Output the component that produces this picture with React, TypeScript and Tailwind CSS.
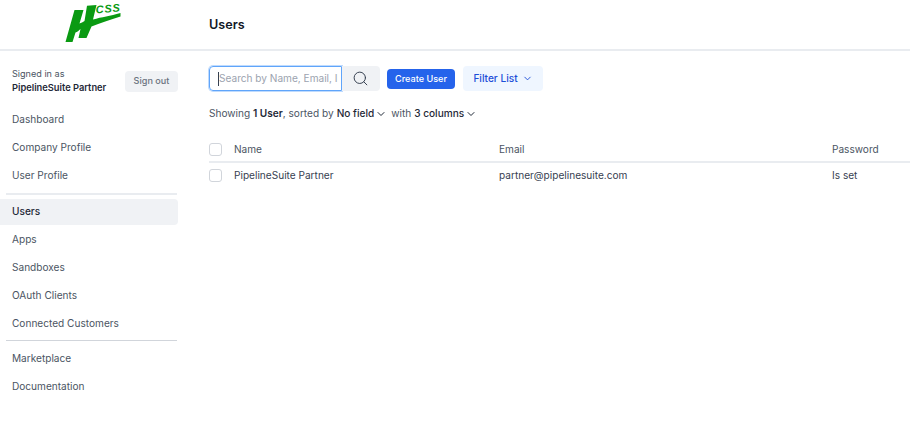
import { ChevronDown, Search } from 'lucide-react';

const groupOne = ['Dashboard', 'Company Profile', 'User Profile'];
const groupTwo = ['Users', 'Apps', 'Sandboxes', 'OAuth Clients', 'Connected Customers'];
const groupThree = ['Marketplace', 'Documentation'];

function Logo() {
  return (
    <svg width="62" height="44" viewBox="0 0 62 44" className="shrink-0">
      <path fill="#0a9a12" d="M9.5 9 L18.5 9 L14.5 22.5 C16 22 18 21 19.5 20 L22 4.7 L31.5 4 L28 18.5 C37 16 45 15 55.5 12 L55.5 15.5 C45 19 35 22 26.5 25.5 L21.5 37 L13.5 37 L15.5 28 C14 29.5 12 31 10.5 31.5 L7.5 41 L0.5 41 Z" />
      <text x="31" y="12.5" fill="#0a9a12" fontSize="11" fontWeight="700" fontStyle="italic" transform="rotate(-5 31 12)" fontFamily="'Liberation Sans', sans-serif" letterSpacing="0.8">CSS</text>
    </svg>
  );
}

function NavItem({ label, active }: { label: string; active?: boolean }) {
  return (
    <div className={active ? 'h-[26px] mb-[1px] flex items-center pl-3 rounded-r bg-[#f0f2f5] text-[#1f2937] font-medium' : 'h-[27.8px] flex items-center pl-3 text-[#4b5563]'}>
      {label}
    </div>
  );
}

export default function App() {
  return (
    <div className="h-[433px] w-[910px] bg-white overflow-hidden flex flex-col text-[10.1px] text-[#374151] font-['Inter',sans-serif]">
      <header className="h-[51px] flex border-b-2 border-[#e9ecf0]">
        <div className="w-[183px] pl-[65px] pt-[1px]">
          <Logo />
        </div>
        <h1 className="pl-[26px] pt-[16px] text-[12.6px] font-semibold text-[#111827]">Users</h1>
      </header>
      <div className="flex flex-1">
        <aside className="w-[183px]">
          <div className="flex items-center justify-between pl-3 pr-[5px] pt-[16px] pb-[11px]">
            <div className="leading-[14px] text-[9.3px]">
              <div className="text-[#4b5563] text-[9.1px]">Signed in as</div>
              <div className="font-semibold text-[#1f2937]">PipelineSuite Partner</div>
            </div>
            <button className="h-[21px] w-[53px] rounded bg-[#f0f2f5] text-[9.1px] font-medium text-[#6b7280]">Sign out</button>
          </div>
          <nav>
            {groupOne.map((item) => (
              <NavItem key={item} label={item} />
            ))}
            <div className="mx-[6px] mt-[3.5px] mb-[4px] border-t-2 border-[#e9ecf0]" />
            <div className="mr-[5px]">
              {groupTwo.map((item) => (
                <NavItem key={item} label={item} active={item === 'Users'} />
              ))}
            </div>
            <div className="mx-[6px] mt-[3px] mb-[4px] border-t border-[#d1d5db]" />
            {groupThree.map((item) => (
              <NavItem key={item} label={item} />
            ))}
          </nav>
        </aside>
        <main className="flex-1 pl-[26px] pt-[15px]">
          <div className="flex items-center">
            <div className="w-[133px] h-[25px] flex items-center rounded-l border border-[#60a5fa] pl-2 pr-[3px] text-[#9ca3af] shadow-[0_0_0_1px_#bfdbfe]">
              <span className="w-px h-[14px] bg-[#374151] shrink-0" />
              <span className="overflow-hidden whitespace-nowrap">Search by Name, Email, ID</span>
            </div>
            <button className="w-[38px] h-[25px] flex items-center justify-center pr-[2px] rounded-r bg-[#f0f2f5] text-[#374151]">
              <Search size={17} strokeWidth={1.4} />
            </button>
            <button className="ml-[7px] w-[68px] h-[20px] rounded-sm bg-[#2563eb] text-white text-[9.1px] font-medium">Create User</button>
            <button className="ml-[8px] w-[80px] h-[25px] flex items-center justify-center gap-1 rounded bg-[#eff6ff] text-[#1d4ed8] font-medium">
              Filter List
              <ChevronDown size={11} />
            </button>
          </div>
          <div className="mt-[15px] flex items-center text-[#4b5563]">
            <span>Showing <span className="font-semibold text-[#1f2937]">1 User</span>, sorted by</span>
            <span className="ml-[3px] font-medium text-[#1f2937]">No field</span>
            <ChevronDown size={12} className="ml-[1px] text-[#1f2937]" />
            <span className="ml-[4px]">with</span>
            <span className="ml-[3px] font-medium text-[#1f2937]">3 columns</span>
            <ChevronDown size={12} className="ml-[1px] text-[#1f2937]" />
          </div>
          <div className="mt-[15px] h-[27px] pt-[2px] grid grid-cols-[25px_265px_333px_1fr] items-center border-b-2 border-[#e9ecf0] text-[#4b5563]">
            <span className="w-[13px] h-[13px] rounded-[3px] border border-[#d1d5db]" />
            <span>Name</span>
            <span>Email</span>
            <span>Password</span>
          </div>
          <div className="h-[25px] grid grid-cols-[25px_265px_333px_1fr] items-center text-[#374151]">
            <span className="w-[13px] h-[13px] rounded-[3px] border border-[#d1d5db]" />
            <span>PipelineSuite Partner</span>
            <span>partner@pipelinesuite.com</span>
            <span>Is set</span>
          </div>
        </main>
      </div>
    </div>
  );
}
